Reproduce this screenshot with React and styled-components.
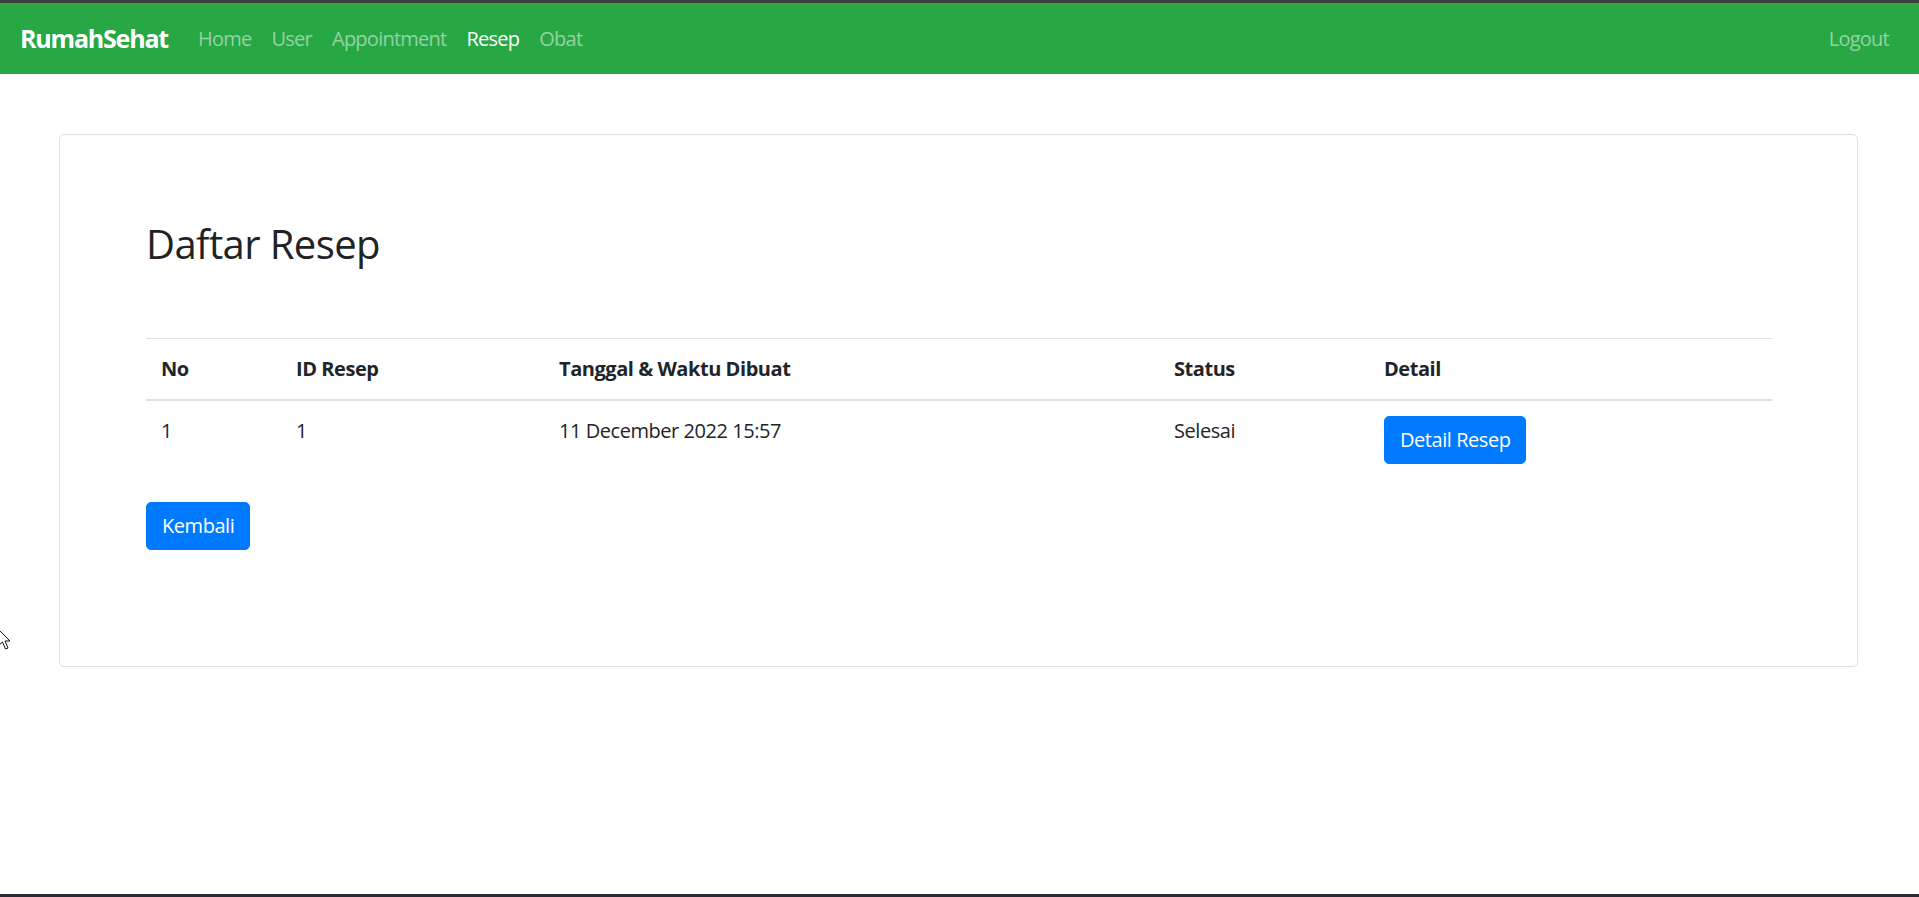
import React from "react";
import styled, { createGlobalStyle } from "styled-components";

const GlobalStyle = createGlobalStyle`
  html, body {
    margin: 0;
    padding: 0;
    background: #fff;
  }
  body {
    font-family: "Segoe UI", "Open Sans", "Noto Sans", sans-serif;
    font-size: 20px;
    line-height: 1.5;
    color: #212529;
  }
  * {
    box-sizing: border-box;
  }
`;

const Page = styled.div`
  position: relative;
  min-height: 897px;
  border-top: 3px solid #3b3e3b;
  border-bottom: 3px solid #262b36;
`;

const Navbar = styled.nav`
  display: flex;
  align-items: center;
  height: 71px;
  padding: 10px 20px;
  background: #28a745;
`;

const Brand = styled.a`
  font-size: 25px;
  font-weight: 700;
  color: #fff;
  margin-right: 20px;
  letter-spacing: -1.2px;
  text-decoration: none;
`;

const NavList = styled.div`
  display: flex;
  align-items: center;
  flex: 1;
`;

const NavLink = styled.a`
  padding: 0 10px;
  color: ${p => (p.active ? "#fff" : "rgba(255, 255, 255, 0.5)")};
  text-decoration: none;
  font-size: 20px;
  letter-spacing: -0.75px;
`;

const Main = styled.main`
  padding: 60px 61px 60px 59px;
`;

const Card = styled.section`
  border: 1px solid rgba(0, 0, 0, 0.125);
  border-radius: 5px;
  padding: 85px 85px 116px 86px;
`;

const Title = styled.h2`
  margin: 0 0 70px;
  font-size: 40px;
  font-weight: 500;
  line-height: 1.2;
  letter-spacing: -0.6px;
  color: #1f2326;
`;

const Table = styled.table`
  width: 100%;
  border-collapse: collapse;
  margin-bottom: 23px;
  letter-spacing: -0.45px;
`;

const Th = styled.th`
  text-align: left;
  font-weight: 700;
  padding: 15px;
  width: ${p => p.w}px;
  border-top: 1px solid #dee2e6;
  border-bottom: 2px solid #dee2e6;
  vertical-align: bottom;
`;

const Td = styled.td`
  padding: 15px;
  vertical-align: top;
`;

const Button = styled.button`
  font-family: inherit;
  font-size: 20px;
  line-height: 30px;
  letter-spacing: -0.45px;
  color: #fff;
  background: #007bff;
  border: 1px solid #007bff;
  border-radius: 5px;
  padding: 8px 15px;
  cursor: pointer;
`;

const Cursor = styled.svg`
  position: absolute;
  left: -2px;
  top: 626px;
`;

const rows = [
  { no: 1, id: 1, date: "11 December 2022 15:57", status: "Selesai" }
];

export default function App() {
  return (
    <>
      <GlobalStyle />
      <Page>
        <Navbar>
          <Brand href="#">RumahSehat</Brand>
          <NavList>
            <NavLink href="#">Home</NavLink>
            <NavLink href="#">User</NavLink>
            <NavLink href="#">Appointment</NavLink>
            <NavLink href="#" active>Resep</NavLink>
            <NavLink href="#">Obat</NavLink>
          </NavList>
          <NavLink href="#">Logout</NavLink>
        </Navbar>
        <Main>
          <Card>
            <Title>Daftar Resep</Title>
            <Table>
              <thead>
                <tr>
                  <Th w={135}>No</Th>
                  <Th w={263}>ID Resep</Th>
                  <Th w={615}>Tanggal &amp; Waktu Dibuat</Th>
                  <Th w={210}>Status</Th>
                  <Th>Detail</Th>
                </tr>
              </thead>
              <tbody>
                {rows.map(r => (
                  <tr key={r.no}>
                    <Td>{r.no}</Td>
                    <Td>{r.id}</Td>
                    <Td>{r.date}</Td>
                    <Td>{r.status}</Td>
                    <Td>
                      <Button>Detail Resep</Button>
                    </Td>
                  </tr>
                ))}
              </tbody>
            </Table>
            <Button>Kembali</Button>
          </Card>
        </Main>
        <Cursor width="14" height="24" viewBox="0 0 14 24">
          <path
            d="M0 0 L12 12 L7 12 L10 19 L7.5 20 L4.5 13 L0 17 Z"
            fill="#fff"
            stroke="#111"
            strokeWidth="1"
          />
        </Cursor>
      </Page>
    </>
  );
}
